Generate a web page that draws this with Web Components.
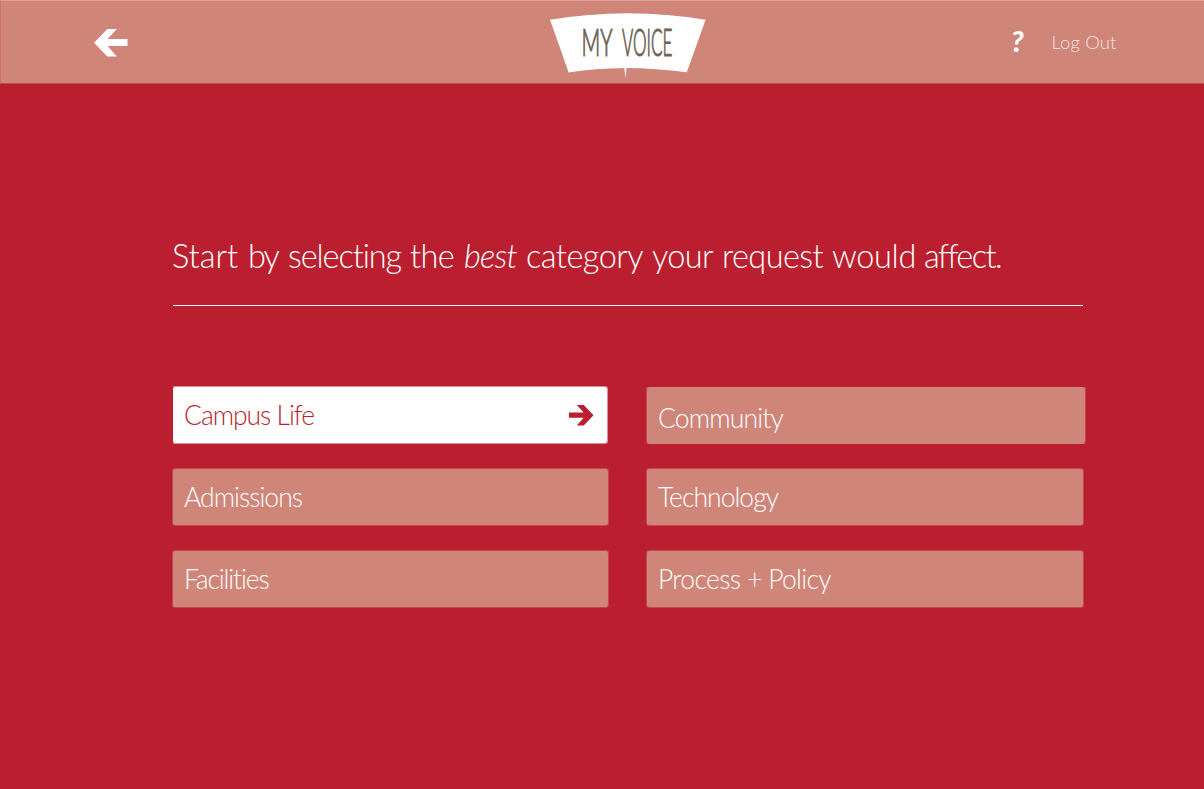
<!DOCTYPE html>
<html lang="en">
<head>
<meta charset="utf-8">
<title>My Voice</title>
<style>
html,body{margin:0;height:100%;background:#bb1f2f}
body{font-family:Lato,"Open Sans",sans-serif;font-weight:300;color:#fff;overflow:hidden}
</style>
</head>
<body>
<voice-app></voice-app>
<script>
class Base extends HTMLElement{
  constructor(){super();this.attachShadow({mode:'open'}).innerHTML=this.constructor.html;}
}

/* A run of text tracked so that it fills the given measure. */
class FitText extends Base{
  static html=`<style>:host{display:inline-block;white-space:nowrap}span{display:inline-block;font-variant-ligatures:none}</style><span><slot></slot></span>`;
  connectedCallback(){
    const w=+this.getAttribute('measure'),s=this.shadowRoot.querySelector('span');
    this.style.width=w+'px';
    s.style.letterSpacing=((w-s.getBoundingClientRect().width)/this.textContent.length)+'px';
  }
}
class ArrowIcon extends Base{
  static html=`<style>:host{display:block}svg{display:block;width:100%;height:100%}</style>
  <svg viewBox="0 0 34 28" preserveAspectRatio="none"><path fill="currentColor" d="M0 14 13.5 0H23.2L13.7 10.3H34V17.4H13.7L23.2 28H13.5Z"/></svg>`;
}
class VoiceLogo extends Base{
  static html=`<style>:host{display:block;width:156px;height:66px}svg{display:block}text{font:300 37px Lato,sans-serif;fill:#6f6358;stroke:#6f6358;stroke-width:1.1;stroke-linejoin:round}</style>
  <svg width="156" height="66" viewBox="0 0 156 66"><path fill="#fff" d="M0 6.8Q78-6.3 155.6 6.8L136.8 59.2Q106 55.2 76.5 55L75.6 65 74.3 55Q46 55.4 18.7 59.4Z"/>
  <text data-x="31.5" data-w="31">MY</text><text data-x="72" data-w="50.5">VOICE</text></svg>`;
  /* The wordmark is condensed horizontally, each word to its own width. */
  connectedCallback(){
    for(const t of this.shadowRoot.querySelectorAll('text'))
      t.setAttribute('transform',`translate(${t.dataset.x} 43) scale(${t.dataset.w/t.getComputedTextLength()} 1)`);
  }
}
class TopBar extends Base{
  static html=`<style>
  :host{display:grid;grid-template-columns:550px 156px 1fr;height:84px;box-sizing:border-box;background:#cf8578;border-top:1px solid #dd9d95;border-bottom:1px solid #c0473f;border-left:1px solid #d0726b}
  .back{padding:28px 0 0 93px}.back arrow-icon{width:33.5px;height:27.5px}
  .mid{padding-top:12px;margin-left:-1px}
  .end{display:flex;padding-left:304px}
  .q{font:italic 900 29px/34px Lato,sans-serif;width:40.5px;padding-top:23px}
  .out{font-size:18.5px;line-height:24px;padding-top:29px;color:#f5e5e2}
  </style><div class="back"><arrow-icon></arrow-icon></div><div class="mid"><voice-logo></voice-logo></div>
  <div class="end"><div class="q">?</div><div class="out"><fit-text measure="65">Log Out</fit-text></div></div>`;
}
class PageTitle extends Base{
  static html=`<style>
  :host{display:block;margin:150px 121px 0 173px;border-bottom:1px solid #fff;height:71px}
  h1{margin:0 0 0 -1px;font-weight:300;font-size:32.5px;line-height:44px;display:grid;grid-template-columns:76px 40px 122px 54px 62px 126px 70px 110px 92px 80px;white-space:nowrap}
  i{font-style:italic}
  </style><h1><fit-text measure="66">Start</fit-text><fit-text measure="30">by</fit-text><fit-text measure="113">selecting</fit-text><fit-text measure="44">the</fit-text><i><fit-text measure="53">best</fit-text></i><fit-text measure="117">category</fit-text><fit-text measure="61">your</fit-text><fit-text measure="101">request</fit-text><fit-text measure="84">would</fit-text><fit-text measure="77">affect.</fit-text></h1>`;
}
class CategoryCard extends Base{
  static html=`<style>
  :host{display:flex;justify-content:space-between;box-sizing:border-box;height:58px;background:#cf8578;background-clip:padding-box;border:1px solid rgba(207,133,120,.4);border-radius:3px;padding:10px 14px 0 11px;font-size:26.5px;line-height:36px}
  :host([selected]){background-color:#fff;border-color:rgba(255,255,255,.5);border-left-color:transparent;color:#bb1f2f;margin-right:1px;padding-right:14px}
  arrow-icon{display:none;width:24.5px;height:20.5px;transform:scaleX(-1);margin-top:8px}
  :host([selected]) arrow-icon{display:block}
  :host([wide]){margin-right:-2px;padding-top:13px;border-top-color:transparent;border-bottom-color:#cf8578}
  </style><slot></slot><arrow-icon></arrow-icon>`;
}
class CategoryGrid extends Base{
  static html=`<style>:host{display:grid;grid-template-columns:437px 438px;gap:24px 37px;margin:80px 0 0 172px}</style><slot></slot>`;
}
class VoiceApp extends Base{
  static html=`<style>:host{display:block;height:789px}</style>
  <top-bar></top-bar><page-title></page-title>
  <category-grid>
  <category-card selected><fit-text measure="130">Campus Life</fit-text></category-card>
  <category-card wide><fit-text measure="125">Community</fit-text></category-card>
  <category-card><fit-text measure="118">Admissions</fit-text></category-card>
  <category-card><fit-text measure="120">Technology</fit-text></category-card>
  <category-card><fit-text measure="84.5">Facilities</fit-text></category-card>
  <category-card><fit-text measure="173">Process + Policy</fit-text></category-card>
  </category-grid>`;
}
for(const [n,c] of Object.entries({'fit-text':FitText,'arrow-icon':ArrowIcon,'voice-logo':VoiceLogo,'top-bar':TopBar,'page-title':PageTitle,'category-card':CategoryCard,'category-grid':CategoryGrid,'voice-app':VoiceApp}))customElements.define(n,c);
</script>
</body>
</html>
